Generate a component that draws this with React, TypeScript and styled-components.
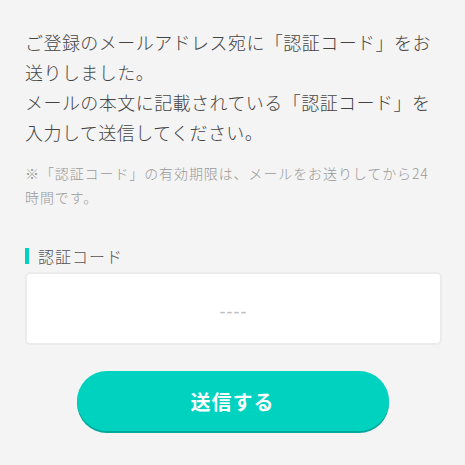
import React from "react";
import styled, { createGlobalStyle } from "styled-components";

const GlobalStyle = createGlobalStyle`
  html, body {
    margin: 0;
    padding: 0;
    background: #f4f4f4;
  }
  body {
    font-family: "Noto Sans CJK JP", "Noto Sans", sans-serif;
  }
`;

const Page = styled.main`
  padding: 27px 24px 32px 25px;
  box-sizing: border-box;
  width: 465px;
`;

const Lead = styled.p`
  margin: 0;
  font-size: 18px;
  font-weight: 300;
  line-height: 30px;
  letter-spacing: 0.45px;
  color: #444;
`;

const Note = styled.p`
  margin: 14px 0 0;
  font-size: 14px;
  font-weight: 300;
  line-height: 24px;
  letter-spacing: 0.9px;
  color: #999;
`;

const Field = styled.div`
  margin-top: 37px;
  display: flex;
  flex-direction: column;
  gap: 6px;
`;

const Label = styled.label`
  display: flex;
  align-items: center;
  gap: 9px;
  font-size: 16px;
  font-weight: 300;
  line-height: 20px;
  letter-spacing: 1px;
  color: #555;

  &::before {
    content: "";
    width: 4px;
    height: 16px;
    background: #00d2c0;
  }
`;

const CodeInput = styled.input`
  box-sizing: border-box;
  width: 417px;
  height: 73px;
  padding: 7px 0 0;
  border: 2px solid #ebebeb;
  border-radius: 5px;
  background: #fff;
  text-align: center;
  font-family: "Liberation Sans", sans-serif;
  font-size: 18px;
  letter-spacing: 1px;
  color: #555;
  outline: none;

  &::placeholder {
    color: #bdbdbd;
  }
`;

const Actions = styled.div`
  margin-top: 26px;
  display: flex;
  justify-content: center;
  padding-right: 1px;
`;

const SubmitButton = styled.button`
  width: 312px;
  height: 60px;
  border: none;
  border-radius: 30px;
  background: #00d2c0;
  box-shadow: 0 2px 0 #00a999;
  color: #fff;
  font-family: "Noto Sans CJK JP", sans-serif;
  font-size: 20px;
  font-weight: 700;
  letter-spacing: 1px;
  cursor: pointer;
`;

export default function App() {
  return (
    <>
      <GlobalStyle />
      <Page>
        <Lead>
          ご登録のメールアドレス宛に「認証コード」をお送りしました。
          <br />
          メールの本文に記載されている「認証コード」を入力して送信してください。
        </Lead>
        <Note>※「認証コード」の有効期限は、メールをお送りしてから24時間です。</Note>
        <Field>
          <Label htmlFor="code">認証コード</Label>
          <CodeInput id="code" placeholder="----" />
        </Field>
        <Actions>
          <SubmitButton type="button">送信する</SubmitButton>
        </Actions>
      </Page>
    </>
  );
}
